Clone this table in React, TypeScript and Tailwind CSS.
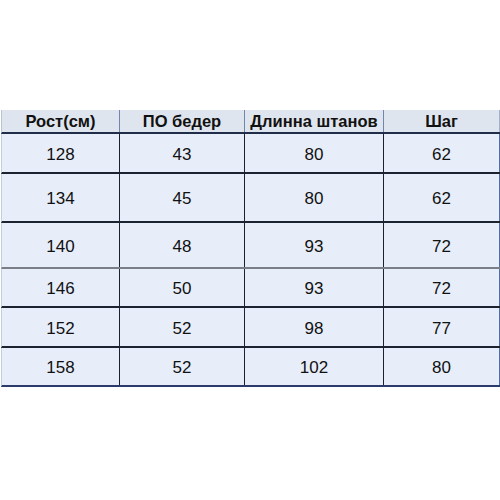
// Size chart table: height / hips / trouser length / inseam

const HEADERS = ['Рост(см)', 'ПО бедер', 'Длинна штанов', 'Шаг'];

const ROWS: { cells: string[]; h: string; line: string }[] = [
  { cells: ['128', '43', '80', '62'], h: 'h-[40px]', line: 'border-[#1b2230]' },
  { cells: ['134', '45', '80', '62'], h: 'h-[49px]', line: 'border-[#1b2230]' },
  { cells: ['140', '48', '93', '72'], h: 'h-[46px]', line: 'border-[#7a7e86]' },
  { cells: ['146', '50', '93', '72'], h: 'h-[39px]', line: 'border-[#1b2230]' },
  { cells: ['152', '52', '98', '77'], h: 'h-[40px]', line: 'border-[#1b2230]' },
  { cells: ['158', '52', '102', '80'], h: 'h-[39px]', line: 'border-[#2b3b6b]' },
];

const COLS = 'grid grid-cols-[118px_125px_139px_116px]';

export default function App(): JSX.Element {
  return (
    <div className="w-[500px] h-[500px] bg-white font-['Liberation_Sans',Arial,sans-serif] text-[#111]">
      <div className="pt-[110px] pl-px">
        <div className={`${COLS} h-[24px] bg-[#dfe5ee] border-b-2 border-[#1f2d48] border-l border-l-[#b9c3d2]`}>
          {HEADERS.map((t, i) => (
            <div
              key={t}
              className={`flex items-center justify-center pt-px text-[16.5px] font-bold leading-none ${
                i < 3 ? 'border-r border-[#6f86ad]' : 'border-r border-[#9fb0cc]'
              }`}
            >
              {t}
            </div>
          ))}
        </div>
        {ROWS.map((r, ri) => (
          <div
            key={ri}
            className={`${COLS} ${r.h} bg-[#e7eefa] border-b-2 ${r.line} border-l border-l-[#c3cede]`}
          >
            {r.cells.map((c, i) => (
              <div
                key={i}
                className={`flex items-center justify-center pt-[2px] text-[17px] leading-none ${
                  i < 3 ? 'border-r border-[#1b2230]' : 'border-r border-[#4e6fa8]'
                }`}
              >
                {c}
              </div>
            ))}
          </div>
        ))}
      </div>
    </div>
  );
}
